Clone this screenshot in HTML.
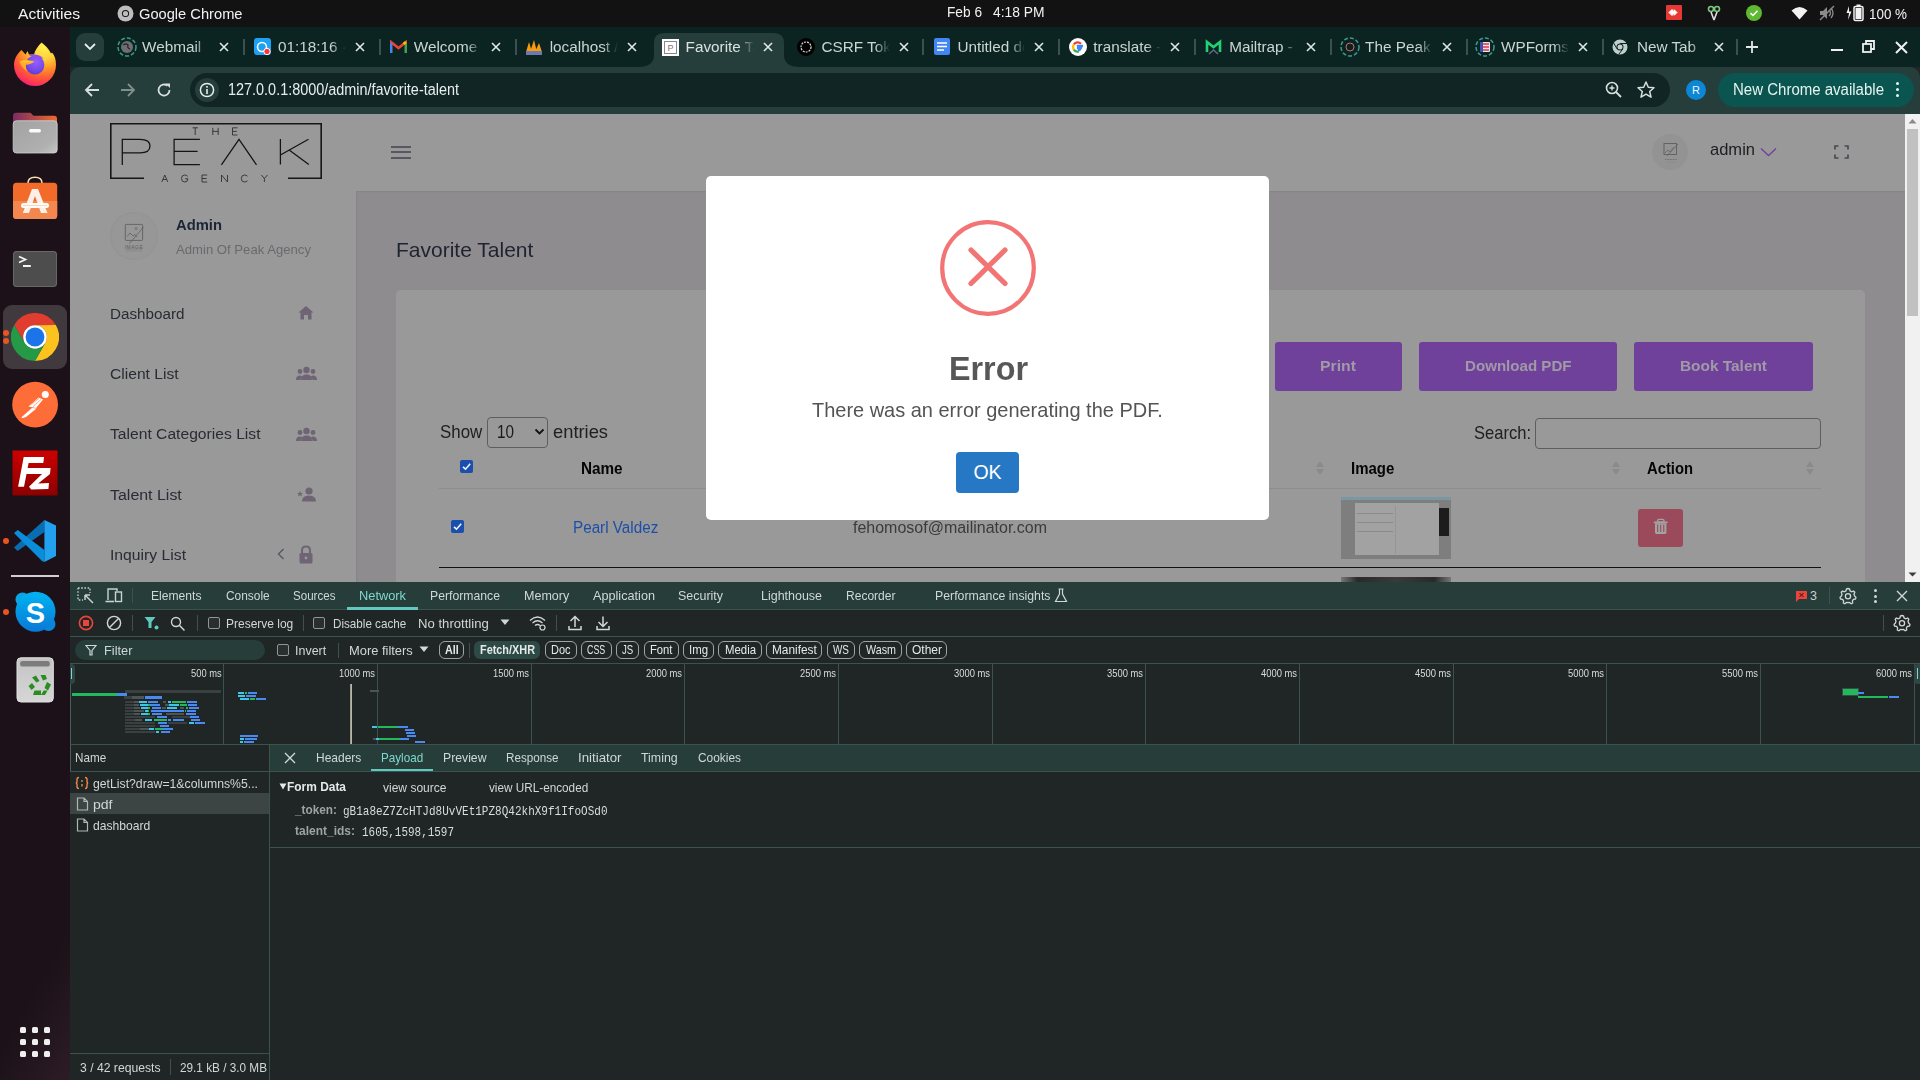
<!DOCTYPE html>
<html><head><meta charset="utf-8"><title>Favorite Talent</title>
<style>
html,body{margin:0;padding:0;width:1920px;height:1080px;overflow:hidden;background:#202525;}
body>div,body>span,body>svg{position:absolute;}
span{white-space:pre;line-height:1;}
</style></head><body>
<div style="left:0px;top:0px;width:1920px;height:27px;background:#121212;"></div>
<span style="left:18.00px;top:6.33px;font-family:'Liberation Sans';font-size:15.5px;font-weight:400;color:#f2f2f2;letter-spacing:0.000px;transform:scaleX(1.0138);transform-origin:0 0;">Activities</span>
<svg style="left:117px;top:5px" width="17" height="17" viewBox="0 0 17 17"><circle cx="8.5" cy="8.5" r="8" fill="#bdbdbd"/><circle cx="8.5" cy="8.5" r="3.6" fill="#121212"/><circle cx="8.5" cy="8.5" r="2.6" fill="#bdbdbd"/></svg>
<span style="left:139.00px;top:6.33px;font-family:'Liberation Sans';font-size:15.5px;font-weight:400;color:#f2f2f2;letter-spacing:0.000px;transform:scaleX(0.9459);transform-origin:0 0;">Google Chrome</span>
<span style="left:946.60px;top:5.87px;font-family:'Liberation Sans';font-size:13.8px;font-weight:400;color:#f2f2f2;letter-spacing:0.000px;transform:scaleX(0.9920);transform-origin:0 0;">Feb 6</span>
<span style="left:992.50px;top:5.87px;font-family:'Liberation Sans';font-size:13.8px;font-weight:400;color:#f2f2f2;letter-spacing:0.000px;transform:scaleX(1.0021);transform-origin:0 0;">4:18 PM</span>
<div style="left:1666px;top:5px;width:16px;height:15px;background:#e53935;border-radius:1px"></div>
<svg style="left:1668px;top:8px" width="12" height="9" viewBox="0 0 12 9"><path d="M1 4.5 L4 1.5 L7 4.5 L4 7.5Z M6 1.5 L9 4.5 L6 7.5" fill="#fff" stroke="#fff" stroke-width="1"/></svg>
<svg style="left:1706px;top:5px" width="16" height="16" viewBox="0 0 16 16"><circle cx="5" cy="4" r="2.5" fill="none" stroke="#7cc47f" stroke-width="1.6"/><circle cx="11" cy="4" r="2.5" fill="none" stroke="#7cc47f" stroke-width="1.6"/><path d="M5 7 L8 15 M11 7 L8 15" stroke="#ddd" stroke-width="1.6"/></svg>
<svg style="left:1746px;top:5px" width="16" height="16" viewBox="0 0 16 16"><circle cx="8" cy="8" r="8" fill="#5fb832"/><path d="M4.5 8.2 L7 10.5 L11.5 5.8" fill="none" stroke="#fff" stroke-width="1.6"/></svg>
<svg style="left:1791px;top:6px" width="17" height="14" viewBox="0 0 17 14"><path d="M0.5 4.5 Q8.5 -2.5 16.5 4.5 L8.5 13.5Z" fill="#f2f2f2"/></svg>
<svg style="left:1819px;top:5px" width="16" height="16" viewBox="0 0 16 16"><path d="M1 6 H4 L8 2 V14 L4 10 H1Z" fill="#8a8a8a"/><path d="M10 5 Q13 8 10 11 M12 3 Q16 8 12 13" fill="none" stroke="#8a8a8a" stroke-width="1.3"/><path d="M1 15 L15 1" stroke="#8a8a8a" stroke-width="1.4"/></svg>
<svg style="left:1846px;top:4px" width="20" height="18" viewBox="0 0 20 18"><path d="M3 2 L0.5 9 H3 L2 16 L5.5 7.5 H3Z" fill="#f2f2f2"/><rect x="8" y="2.5" width="9" height="14" rx="1.5" fill="none" stroke="#f2f2f2" stroke-width="1.5"/><rect x="10.5" y="0.5" width="4" height="2" fill="#f2f2f2"/><rect x="9.5" y="4" width="6" height="11" fill="#f2f2f2"/></svg>
<span style="left:1869.00px;top:6.33px;font-family:'Liberation Sans';font-size:15.5px;font-weight:400;color:#f2f2f2;letter-spacing:0.000px;transform:scaleX(0.8646);transform-origin:0 0;">100 %</span>
<div style="left:0px;top:27px;width:70px;height:1053px;background:#1c1118;"></div>
<div style="left:0px;top:860px;width:70px;height:220px;background:linear-gradient(120deg,rgba(44,28,38,0) 0%,rgba(44,28,38,0) 55%,rgba(44,28,38,1) 100%);"></div>
<svg style="left:8px;top:38px" width="54" height="54" viewBox="0 0 54 54">
<defs><radialGradient id="ffg" gradientUnits="userSpaceOnUse" cx="36" cy="8" r="44"><stop offset="0" stop-color="#fff44f"/><stop offset="0.3" stop-color="#ffd03a"/><stop offset="0.5" stop-color="#ff9a28"/><stop offset="0.72" stop-color="#ff5a36"/><stop offset="0.88" stop-color="#ff3458"/><stop offset="1" stop-color="#e8168a"/></radialGradient>
<radialGradient id="ffp" gradientUnits="userSpaceOnUse" cx="28" cy="24" r="13"><stop offset="0" stop-color="#9b5dff"/><stop offset="0.7" stop-color="#7048e8"/><stop offset="1" stop-color="#5a3bc8"/></radialGradient></defs>
<path d="M6 27 A21 21 0 0 0 48 27 C48 21 46.5 17 44 14.5 L43 15.5 C41 11 37 7 33.5 4.5 C30 8 27 12 26 16.5 L21 16.5 L19.5 13 L17.5 16.5 L13.5 12 C9 16 6 21 6 27Z" fill="url(#ffg)"/>
<circle cx="27" cy="27" r="9.4" fill="url(#ffp)"/>
<path d="M21 17.5 C26 15.5 32 16.5 35.5 20.5 C33 20 31.5 20.5 31 21.5 C28 19 24 18.5 21 17.5Z" fill="#8f4fee"/>
<path d="M11.5 23.5 C14 21.5 20 21.5 26.5 23.5 C25 25.5 21 26.5 18 26.8 C17.5 29 18 32 19.5 34 C15.5 31 12.5 27 11.5 23.5Z" fill="#ffae2a"/>
<path d="M12.5 23.3 C15 22.3 20 22.5 25 23.6 C22 24.8 16 25 12.5 23.3Z" fill="#ffc33a"/>
</svg>
<svg style="left:8px;top:108px" width="54" height="54" viewBox="0 0 54 54">
<defs><linearGradient id="fdt" x1="0" x2="1"><stop offset="0" stop-color="#7a2c62"/><stop offset="1" stop-color="#ef6b2c"/></linearGradient>
<linearGradient id="fdb" x1="0" y1="0" x2="1" y2="1"><stop offset="0" stop-color="#a2a2a2"/><stop offset="0.75" stop-color="#b0b0b0"/><stop offset="1" stop-color="#c6c6c6"/></linearGradient></defs>
<path d="M5 16 V8 Q5 4.8 8 4.8 H22.5 L25.5 7.8 H46 Q49 7.8 49 11 V20 H5Z" fill="url(#fdt)"/>
<rect x="5.2" y="12.8" width="44" height="32.2" rx="3.2" fill="url(#fdb)" stroke="#d2d2d2" stroke-width="0.8"/>
<rect x="21" y="21" width="12" height="3.5" rx="1.7" fill="#fafafa"/>
</svg>
<svg style="left:8px;top:172px" width="54" height="54" viewBox="0 0 54 54">
<path d="M20 13.5 V11 Q20 5.2 27 5.2 Q34 5.2 34 11 V13.5" fill="none" stroke="#f5e2b0" stroke-width="1.6"/>
<rect x="5" y="10.8" width="44.2" height="36.2" rx="3.5" fill="#f26b2a"/>
<path d="M5 29 H49.2 V43.5 Q49.2 47 45.7 47 H8.5 Q5 47 5 43.5Z" fill="#f2874f"/>
<path d="M24 17 H30 L39.5 41 H33 L27 24 L21 41 H14.8Z" fill="#fdf0e8"/>
<rect x="13" y="31" width="28" height="5" rx="2.5" fill="#fffaf6"/>
<rect x="15" y="33.2" width="24" height="0.6" fill="#f6c0a8"/>
</svg>
<div style="left:13px;top:251px;width:44px;height:36px;background:#4d4d4d;border-radius:4px;box-shadow:inset 0 0 0 1px #676767"></div>
<svg style="left:13px;top:251px" width="44" height="36" viewBox="0 0 44 36"><path d="M6 5.5 L12.5 8.5 L6 11.5" fill="none" stroke="#f4f4f4" stroke-width="1.7"/><rect x="10" y="14" width="7.8" height="2" fill="#f4f4f4"/></svg>
<div style="left:3px;top:305px;width:64px;height:64px;background:#403a3e;border-radius:9px"></div>
<svg style="left:11px;top:313px" width="48" height="48" viewBox="0 0 48 48">
<path d="M44.8 12 A24 24 0 0 0 3.2 12 L13.8 29.9 A11.8 11.8 0 0 1 24 12.2 Z" fill="#e03c2f"/>
<path d="M44.8 12 L24 12.2 A11.8 11.8 0 0 1 34.2 29.9 L24 48 A24 24 0 0 0 44.8 12 Z" fill="#fcc31e"/>
<path d="M24 48 L34.2 29.9 A11.8 11.8 0 0 1 13.8 29.9 L3.2 12 A24 24 0 0 0 24 48 Z" fill="#249a47"/>
<circle cx="24" cy="24" r="11.8" fill="#fff"/><circle cx="24" cy="24" r="9.4" fill="#1b74e8"/>
</svg>
<div style="left:3px;top:329.5px;width:6px;height:6px;background:#e95420;border-radius:50%"></div>
<div style="left:3px;top:338.2px;width:6px;height:6px;background:#e95420;border-radius:50%"></div>
<svg style="left:8px;top:377px" width="54" height="54" viewBox="0 0 54 54">
<circle cx="27.1" cy="27.6" r="22.9" fill="#fe6c37"/>
<circle cx="37.3" cy="17.5" r="3.5" fill="#fff"/>
<path d="M20.5 29.5 L30.5 20.5 L35 22.5 L28 31 Z" fill="#fff"/>
<path d="M24 31 L28.5 31.5 L18 40 L14 41.3 L13.5 40.2Z" fill="#fff"/>
<path d="M23 27.5 L31.5 21 M25 29.5 L33 22.5" stroke="#fe6c37" stroke-width="0.6"/>
</svg>
<svg style="left:6px;top:446px" width="58" height="58" viewBox="0 0 58 58">
<defs><linearGradient id="fzg" x1="0" y1="0" x2="0" y2="1"><stop offset="0" stop-color="#cc0000"/><stop offset="1" stop-color="#8c0000"/></linearGradient></defs>
<rect x="6.5" y="4.5" width="45" height="45" fill="url(#fzg)"/>
<g fill="none" stroke="url(#fzg)" stroke-width="3" stroke-dasharray="2.2 1.9">
<path d="M6.5 4.4 H51.5"/><path d="M6.5 49.6 H51.5"/><path d="M6.4 4.5 V49.5"/><path d="M51.6 4.5 V49.5"/></g>
<path d="M17.7 11 L38.1 11 L37.3 16.9 L22.6 16.9 L21.6 22 L44.6 22 L44 28 L20.5 28 L18 40.8 L12.1 40.8Z" fill="#fff"/>
<path d="M36 28 L44 28 L32.2 37.5 L43 37 L42.4 43 L25.2 43.5 L23 40.8 Z" fill="#fff"/>
</svg>
<svg style="left:0px;top:514px" width="64" height="64" viewBox="0 514 64 64">
<path d="M14 547.5 L17.6 551 L44.4 532 L44.4 520 Z" fill="#0a6db2"/>
<path d="M14 533 L17.8 530 L44.4 550 L44.4 562 L42 561Z" fill="#0c8ddc"/>
<path d="M44.4 520 L56 525.5 V556 L44.4 562Z" fill="#22a2ee"/>
</svg>
<div style="left:3px;top:538px;width:6px;height:6px;background:#e95420;border-radius:50%"></div>
<div style="left:11px;top:575px;width:48px;height:1.5px;background:#cfcfcf;"></div>
<svg style="left:0px;top:584px" width="64" height="64" viewBox="0 584 64 64">
<defs><linearGradient id="skg" x1="0" y1="0" x2="0" y2="1"><stop offset="0" stop-color="#00b4f2"/><stop offset="1" stop-color="#0a78d6"/></linearGradient></defs>
<circle cx="22.5" cy="599.5" r="7" fill="#0aa4e4"/><circle cx="48.5" cy="624" r="7" fill="#0a86d8"/>
<circle cx="35.5" cy="611.7" r="20" fill="url(#skg)"/>
<text x="35.3" y="623" font-family="Liberation Sans" font-weight="bold" font-size="29" fill="#fff" text-anchor="middle">S</text>
</svg>
<div style="left:3px;top:609px;width:6px;height:6px;background:#e95420;border-radius:50%"></div>
<svg style="left:16px;top:657px" width="38" height="46" viewBox="0 0 38 46">
<defs><linearGradient id="trg" x1="0" y1="0" x2="0" y2="1"><stop offset="0" stop-color="#c4c4c4"/><stop offset="1" stop-color="#d6d6d6"/></linearGradient></defs>
<rect x="1" y="0.8" width="36.3" height="44.2" rx="4" fill="url(#trg)" stroke="#e2e2e2" stroke-width="1"/>
<rect x="4.2" y="4" width="29.6" height="5.6" rx="2.2" fill="#7c7c7c"/>
<g fill="#2a8d22">
<path d="M16 20.5 L20 18.5 L23.5 24 L20.5 25.5Z"/><path d="M24.5 18 L29.5 18 L31 22 L27 23.5Z"/>
<path d="M31 25 L35 27.5 L32 33.5 L28.5 31Z"/><path d="M27.5 33.5 L31.5 33.5 L29 38 L25 38Z"/>
<path d="M18.5 33.5 L25 33.5 L25 38 L17 38 Z"/><path d="M12.5 29 L16 26 L19 30 L15.5 33Z"/>
</g>
</svg>
<div style="left:20px;top:1027px;width:6px;height:6px;background:#efefef;border-radius:1.5px"></div>
<div style="left:20px;top:1039px;width:6px;height:6px;background:#efefef;border-radius:1.5px"></div>
<div style="left:20px;top:1051px;width:6px;height:6px;background:#efefef;border-radius:1.5px"></div>
<div style="left:32px;top:1027px;width:6px;height:6px;background:#efefef;border-radius:1.5px"></div>
<div style="left:32px;top:1039px;width:6px;height:6px;background:#efefef;border-radius:1.5px"></div>
<div style="left:32px;top:1051px;width:6px;height:6px;background:#efefef;border-radius:1.5px"></div>
<div style="left:44px;top:1027px;width:6px;height:6px;background:#efefef;border-radius:1.5px"></div>
<div style="left:44px;top:1039px;width:6px;height:6px;background:#efefef;border-radius:1.5px"></div>
<div style="left:44px;top:1051px;width:6px;height:6px;background:#efefef;border-radius:1.5px"></div>
<div style="left:70px;top:27px;width:1850px;height:40px;background:#0c2421;"></div>
<div style="left:76px;top:33px;width:28px;height:28px;background:#263e3b;border-radius:9px"></div>
<svg style="left:83px;top:42px" width="14" height="9" viewBox="0 0 14 9"><path d="M2 2 L7 7 L12 2" fill="none" stroke="#e6eeec" stroke-width="1.8"/></svg>
<svg style="left:638px;top:33px" width="162" height="34" viewBox="0 0 162 34"><path d="M0 34 Q16 34 16 22 V10 Q16 0 26 0 H136 Q146 0 146 10 V22 Q146 34 162 34Z" fill="#263e3b"/></svg>
<div style="left:142.0px;top:36px;width:68px;height:24px;overflow:hidden;-webkit-mask-image:linear-gradient(90deg,#000 78%,transparent 100%);mask-image:linear-gradient(90deg,#000 78%,transparent 100%)"><span style="position:absolute;left:0;top:3.20px;font-family:'Liberation Sans';font-size:15.3px;color:#c9d6d2">Webmail</span></div>
<svg style="left:218.0px;top:41px" width="12" height="12" viewBox="0 0 12 12"><path d="M2 2 L10 10 M10 2 L2 10" stroke="#e0e8e6" stroke-width="1.6"/></svg>
<div style="left:243px;top:39px;width:1.5px;height:16px;background:#3a524f;"></div>
<div style="left:277.9px;top:36px;width:68px;height:24px;overflow:hidden;-webkit-mask-image:linear-gradient(90deg,#000 78%,transparent 100%);mask-image:linear-gradient(90deg,#000 78%,transparent 100%)"><span style="position:absolute;left:0;top:3.20px;font-family:'Liberation Sans';font-size:15.3px;color:#c9d6d2">01:18:16 · Pomo</span></div>
<svg style="left:353.9px;top:41px" width="12" height="12" viewBox="0 0 12 12"><path d="M2 2 L10 10 M10 2 L2 10" stroke="#e0e8e6" stroke-width="1.6"/></svg>
<div style="left:379px;top:39px;width:1.5px;height:16px;background:#3a524f;"></div>
<div style="left:413.8px;top:36px;width:68px;height:24px;overflow:hidden;-webkit-mask-image:linear-gradient(90deg,#000 78%,transparent 100%);mask-image:linear-gradient(90deg,#000 78%,transparent 100%)"><span style="position:absolute;left:0;top:3.20px;font-family:'Liberation Sans';font-size:15.3px;color:#c9d6d2">Welcome to</span></div>
<svg style="left:489.8px;top:41px" width="12" height="12" viewBox="0 0 12 12"><path d="M2 2 L10 10 M10 2 L2 10" stroke="#e0e8e6" stroke-width="1.6"/></svg>
<div style="left:515px;top:39px;width:1.5px;height:16px;background:#3a524f;"></div>
<div style="left:549.7px;top:36px;width:68px;height:24px;overflow:hidden;-webkit-mask-image:linear-gradient(90deg,#000 78%,transparent 100%);mask-image:linear-gradient(90deg,#000 78%,transparent 100%)"><span style="position:absolute;left:0;top:3.20px;font-family:'Liberation Sans';font-size:15.3px;color:#c9d6d2">localhost / 127</span></div>
<svg style="left:625.7px;top:41px" width="12" height="12" viewBox="0 0 12 12"><path d="M2 2 L10 10 M10 2 L2 10" stroke="#e0e8e6" stroke-width="1.6"/></svg>
<div style="left:685.6px;top:36px;width:68px;height:24px;overflow:hidden;-webkit-mask-image:linear-gradient(90deg,#000 78%,transparent 100%);mask-image:linear-gradient(90deg,#000 78%,transparent 100%)"><span style="position:absolute;left:0;top:3.20px;font-family:'Liberation Sans';font-size:15.3px;color:#d8e3e0">Favorite Talent</span></div>
<svg style="left:761.6px;top:41px" width="12" height="12" viewBox="0 0 12 12"><path d="M2 2 L10 10 M10 2 L2 10" stroke="#e0e8e6" stroke-width="1.6"/></svg>
<div style="left:821.5px;top:36px;width:68px;height:24px;overflow:hidden;-webkit-mask-image:linear-gradient(90deg,#000 78%,transparent 100%);mask-image:linear-gradient(90deg,#000 78%,transparent 100%)"><span style="position:absolute;left:0;top:3.20px;font-family:'Liberation Sans';font-size:15.3px;color:#c9d6d2">CSRF Token</span></div>
<svg style="left:897.5px;top:41px" width="12" height="12" viewBox="0 0 12 12"><path d="M2 2 L10 10 M10 2 L2 10" stroke="#e0e8e6" stroke-width="1.6"/></svg>
<div style="left:922px;top:39px;width:1.5px;height:16px;background:#3a524f;"></div>
<div style="left:957.4px;top:36px;width:68px;height:24px;overflow:hidden;-webkit-mask-image:linear-gradient(90deg,#000 78%,transparent 100%);mask-image:linear-gradient(90deg,#000 78%,transparent 100%)"><span style="position:absolute;left:0;top:3.20px;font-family:'Liberation Sans';font-size:15.3px;color:#c9d6d2">Untitled docum</span></div>
<svg style="left:1033.4px;top:41px" width="12" height="12" viewBox="0 0 12 12"><path d="M2 2 L10 10 M10 2 L2 10" stroke="#e0e8e6" stroke-width="1.6"/></svg>
<div style="left:1058px;top:39px;width:1.5px;height:16px;background:#3a524f;"></div>
<div style="left:1093.3px;top:36px;width:68px;height:24px;overflow:hidden;-webkit-mask-image:linear-gradient(90deg,#000 78%,transparent 100%);mask-image:linear-gradient(90deg,#000 78%,transparent 100%)"><span style="position:absolute;left:0;top:3.20px;font-family:'Liberation Sans';font-size:15.3px;color:#c9d6d2">translate - Go</span></div>
<svg style="left:1169.3px;top:41px" width="12" height="12" viewBox="0 0 12 12"><path d="M2 2 L10 10 M10 2 L2 10" stroke="#e0e8e6" stroke-width="1.6"/></svg>
<div style="left:1194px;top:39px;width:1.5px;height:16px;background:#3a524f;"></div>
<div style="left:1229.2px;top:36px;width:68px;height:24px;overflow:hidden;-webkit-mask-image:linear-gradient(90deg,#000 78%,transparent 100%);mask-image:linear-gradient(90deg,#000 78%,transparent 100%)"><span style="position:absolute;left:0;top:3.20px;font-family:'Liberation Sans';font-size:15.3px;color:#c9d6d2">Mailtrap - Safe</span></div>
<svg style="left:1305.2px;top:41px" width="12" height="12" viewBox="0 0 12 12"><path d="M2 2 L10 10 M10 2 L2 10" stroke="#e0e8e6" stroke-width="1.6"/></svg>
<div style="left:1330px;top:39px;width:1.5px;height:16px;background:#3a524f;"></div>
<div style="left:1365.1px;top:36px;width:68px;height:24px;overflow:hidden;-webkit-mask-image:linear-gradient(90deg,#000 78%,transparent 100%);mask-image:linear-gradient(90deg,#000 78%,transparent 100%)"><span style="position:absolute;left:0;top:3.20px;font-family:'Liberation Sans';font-size:15.3px;color:#c9d6d2">The Peak Agency</span></div>
<svg style="left:1441.1px;top:41px" width="12" height="12" viewBox="0 0 12 12"><path d="M2 2 L10 10 M10 2 L2 10" stroke="#e0e8e6" stroke-width="1.6"/></svg>
<div style="left:1466px;top:39px;width:1.5px;height:16px;background:#3a524f;"></div>
<div style="left:1501.0px;top:36px;width:68px;height:24px;overflow:hidden;-webkit-mask-image:linear-gradient(90deg,#000 78%,transparent 100%);mask-image:linear-gradient(90deg,#000 78%,transparent 100%)"><span style="position:absolute;left:0;top:3.20px;font-family:'Liberation Sans';font-size:15.3px;color:#c9d6d2">WPForms Lite</span></div>
<svg style="left:1577.0px;top:41px" width="12" height="12" viewBox="0 0 12 12"><path d="M2 2 L10 10 M10 2 L2 10" stroke="#e0e8e6" stroke-width="1.6"/></svg>
<div style="left:1602px;top:39px;width:1.5px;height:16px;background:#3a524f;"></div>
<div style="left:1636.9px;top:36px;width:68px;height:24px;overflow:hidden;-webkit-mask-image:linear-gradient(90deg,#000 78%,transparent 100%);mask-image:linear-gradient(90deg,#000 78%,transparent 100%)"><span style="position:absolute;left:0;top:3.20px;font-family:'Liberation Sans';font-size:15.3px;color:#c9d6d2">New Tab</span></div>
<svg style="left:1712.9px;top:41px" width="12" height="12" viewBox="0 0 12 12"><path d="M2 2 L10 10 M10 2 L2 10" stroke="#e0e8e6" stroke-width="1.6"/></svg>
<div style="left:1736px;top:39px;width:1.5px;height:16px;background:#3a524f;"></div>
<svg style="left:117px;top:37px" width="20" height="20" viewBox="0 0 20 20"><circle cx="10" cy="10" r="9" fill="none" stroke="#3b9a8e" stroke-width="1.5" stroke-dasharray="4 2"/><circle cx="10" cy="10" r="6" fill="#6e6e72"/><path d="M6 8 Q9 6 11 8 Q10 11 13 12" fill="none" stroke="#2b2b2b" stroke-width="1.4"/></svg>
<svg style="left:254px;top:38px" width="18" height="18" viewBox="0 0 18 18"><rect x="0" y="0" width="17" height="17" rx="3" fill="#1da1f2"/><circle cx="8" cy="9" r="4.5" fill="none" stroke="#fff" stroke-width="1.6"/><circle cx="13" cy="13.5" r="3.2" fill="#f43b3b" stroke="#fff" stroke-width="1"/></svg>
<svg style="left:390px;top:40px" width="17" height="14" viewBox="0 0 17 14"><path d="M1 13 V2 L8.5 8 L16 2 V13" fill="none" stroke="#ea4335" stroke-width="2.6"/><path d="M1 13 V3" stroke="#4285f4" stroke-width="2.6"/><path d="M16 13 V3" stroke="#34a853" stroke-width="2.6"/><path d="M13.5 4 L16 2" stroke="#fbbc04" stroke-width="2.6"/></svg>
<svg style="left:525px;top:38px" width="18" height="18" viewBox="0 0 18 18"><path d="M1 14 L4 4 L7 14Z M5 14 L9 2 L12 14Z M10 14 L14 5 L17 14Z" fill="#f89c0e"/><rect x="1" y="13" width="16" height="4" fill="#6c78af"/></svg>
<svg style="left:662px;top:39px" width="17" height="17" viewBox="0 0 17 17"><rect x="0" y="0" width="17" height="17" fill="#fff"/><rect x="2.5" y="2.5" width="12" height="12" fill="none" stroke="#888" stroke-width="1"/><text x="8.5" y="12" font-family="Liberation Sans" font-size="9" fill="#777" text-anchor="middle">P</text></svg>
<svg style="left:797px;top:38px" width="18" height="18" viewBox="0 0 18 18"><circle cx="9" cy="9" r="9" fill="#000"/><circle cx="9" cy="9" r="5" fill="none" stroke="#ddd" stroke-width="1.2" stroke-dasharray="2 1"/></svg>
<svg style="left:934px;top:38px" width="16" height="17" viewBox="0 0 16 17"><rect x="0" y="0" width="16" height="17" rx="2" fill="#4285f4"/><path d="M3 5 H13 M3 8.5 H13 M3 12 H10" stroke="#fff" stroke-width="1.5"/></svg>
<svg style="left:1069px;top:38px" width="18" height="18" viewBox="0 0 18 18"><circle cx="9" cy="9" r="9" fill="#fff"/><path d="M14 7.9 H9 V10.1 H11.9 A3.4 3.4 0 0 1 9 12.4" fill="none" stroke="#4285f4" stroke-width="2.3"/><path d="M12 5.7 A4.6 4.6 0 0 0 4.9 6.4" fill="none" stroke="#ea4335" stroke-width="2.3"/><path d="M4.9 6.4 A4.6 4.6 0 0 0 4.9 11.6" fill="none" stroke="#fbbc05" stroke-width="2.3"/><path d="M4.9 11.6 A4.6 4.6 0 0 0 9.8 13.5" fill="none" stroke="#34a853" stroke-width="2.3"/></svg>
<svg style="left:1205px;top:38px" width="17" height="18" viewBox="0 0 17 18"><path d="M2 14 V4 L8.5 9 L15 4 V14" fill="none" stroke="#22d172" stroke-width="2.6"/><path d="M4 16 L8.5 12 L13 16" fill="none" stroke="#5a6a8a" stroke-width="1.6"/></svg>
<svg style="left:1340px;top:37px" width="20" height="20" viewBox="0 0 20 20"><circle cx="10" cy="10" r="9" fill="none" stroke="#3b9a8e" stroke-width="1.5" stroke-dasharray="4 2"/><circle cx="10" cy="10" r="6.5" fill="#1b1b1b"/><circle cx="10" cy="10" r="4" fill="none" stroke="#888" stroke-width="1"/></svg>
<svg style="left:1475px;top:37px" width="20" height="20" viewBox="0 0 20 20"><circle cx="10" cy="10" r="9" fill="none" stroke="#3b9a8e" stroke-width="1.5" stroke-dasharray="4 2"/><rect x="5" y="5" width="10" height="10" rx="1" fill="#e5e5f5"/><path d="M6 7 H14 M6 10 H14 M6 13 H14" stroke="#e53935" stroke-width="1.4"/><rect x="5" y="5" width="3" height="10" fill="#3f51b5"/></svg>
<svg style="left:1612px;top:39px" width="16" height="16" viewBox="0 0 16 16"><circle cx="8" cy="8" r="7.5" fill="#bfcfcb"/><circle cx="8" cy="8" r="3.5" fill="#0c2421"/><circle cx="8" cy="8" r="2.5" fill="#bfcfcb"/><path d="M8 4.5 H15 M5 9.8 L1.5 3.8 M10.8 10 L7 15" stroke="#0c2421" stroke-width="1"/></svg>
<svg style="left:1745px;top:40px" width="14" height="14" viewBox="0 0 14 14"><path d="M7 1 V13 M1 7 H13" stroke="#e0e8e6" stroke-width="1.8"/></svg>
<div style="left:1831px;top:49px;width:12px;height:2px;background:#f0f0f0;"></div>
<svg style="left:1862px;top:40px" width="14" height="14" viewBox="0 0 14 14"><rect x="1" y="4" width="8" height="8" fill="none" stroke="#f0f0f0" stroke-width="1.8"/><path d="M4 4 V1 H12 V9 H9" fill="none" stroke="#f0f0f0" stroke-width="1.8"/></svg>
<svg style="left:1895px;top:41px" width="13" height="13" viewBox="0 0 13 13"><path d="M1 1 L12 12 M12 1 L1 12" stroke="#f0f0f0" stroke-width="2"/></svg>
<div style="left:70px;top:67px;width:1850px;height:47px;background:#263e3b;border-radius:10px 10px 0 0"></div>
<svg style="left:83px;top:81px" width="18" height="18" viewBox="0 0 18 18"><path d="M16 9 H3 M9 3 L3 9 L9 15" fill="none" stroke="#d5e0dd" stroke-width="1.8"/></svg>
<svg style="left:119px;top:81px" width="18" height="18" viewBox="0 0 18 18"><path d="M2 9 H15 M9 3 L15 9 L9 15" fill="none" stroke="#7d908c" stroke-width="1.8"/></svg>
<svg style="left:155px;top:81px" width="18" height="18" viewBox="0 0 18 18"><path d="M14.5 9 A5.5 5.5 0 1 1 12.5 4.8" fill="none" stroke="#d5e0dd" stroke-width="1.8"/><path d="M10.5 2.5 H15 V7 Z" fill="#d5e0dd"/></svg>
<div style="left:190px;top:73px;width:1480px;height:34px;background:#112624;border-radius:17px"></div>
<div style="left:195px;top:78px;width:24px;height:24px;background:#263e3b;border-radius:50%"></div>
<svg style="left:199px;top:82px" width="16" height="16" viewBox="0 0 16 16"><circle cx="8" cy="8" r="6.6" fill="none" stroke="#e6eeec" stroke-width="1.5"/><rect x="7.2" y="7" width="1.6" height="5" fill="#e6eeec"/><rect x="7.2" y="4" width="1.6" height="1.7" fill="#e6eeec"/></svg>
<span style="left:228.00px;top:82.14px;font-family:'Liberation Sans';font-size:15.6px;font-weight:400;color:#e6eeec;letter-spacing:0.000px;transform:scaleX(0.9252);transform-origin:0 0;">127.0.0.1:8000/admin/favorite-talent</span>
<svg style="left:1604px;top:80px" width="20" height="20" viewBox="0 0 20 20"><circle cx="8" cy="8" r="5.5" fill="none" stroke="#d5e0dd" stroke-width="1.6"/><path d="M12 12 L17 17" stroke="#d5e0dd" stroke-width="1.8"/><path d="M8 5.5 V10.5 M5.5 8 H10.5" stroke="#d5e0dd" stroke-width="1.4"/></svg>
<svg style="left:1636px;top:80px" width="20" height="20" viewBox="0 0 20 20"><path d="M10 2 L12.3 7.3 L18 7.8 L13.7 11.5 L15 17.2 L10 14.2 L5 17.2 L6.3 11.5 L2 7.8 L7.7 7.3Z" fill="none" stroke="#d5e0dd" stroke-width="1.5" stroke-linejoin="round"/></svg>
<div style="left:1686px;top:80px;width:20px;height:20px;background:#0b87d6;border-radius:50%"></div>
<span style="left:1692.02px;top:85.15px;font-family:'Liberation Sans';font-size:11px;font-weight:400;color:#f0f6ff;letter-spacing:0.000px;">R</span>
<div style="left:1718px;top:73px;width:196px;height:34px;background:#0b5550;border-radius:17px"></div>
<span style="left:1733.00px;top:82.24px;font-family:'Liberation Sans';font-size:15.6px;font-weight:400;color:#e6f4f1;letter-spacing:0.000px;transform:scaleX(0.9625);transform-origin:0 0;">New Chrome available</span>
<div style="left:1896px;top:82px;width:3px;height:3px;background:#e6f4f1;border-radius:50%"></div>
<div style="left:1896px;top:88px;width:3px;height:3px;background:#e6f4f1;border-radius:50%"></div>
<div style="left:1896px;top:94px;width:3px;height:3px;background:#e6f4f1;border-radius:50%"></div>
<div style="left:70px;top:114px;width:1835px;height:468px;background:#999999;"></div>
<div style="left:356px;top:191px;width:1549px;height:391px;background:#8f8c8f;box-shadow:inset 1px 1px 2px rgba(0,0,0,0.06)"></div>
<div style="left:110px;top:123px;width:212px;height:56px;background:transparent;box-shadow:inset 0 0 0 1.6px #161616"></div>
<div style="left:144px;top:175px;width:144px;height:6px;background:#999999;"></div>
<svg style="left:110px;top:123px" width="212" height="62" viewBox="0 0 212 62">
<g fill="none" stroke="#141414" stroke-width="1.25">
<path d="M12.3 42 V16.3 H30 Q40 16.3 40 23 Q40 29.8 30 29.8 H12.3"/>
<path d="M89.9 16.3 H64.1 V41.5 H89.9 M64.1 28.4 H87.6"/>
<path d="M111.4 41.9 L129 16.4 L146.5 41.9"/>
<path d="M170.4 16 V41.5 M170.4 32 L198.5 16.3 M179.5 27.2 L198.8 41.5"/>
</g>
<g fill="none" stroke="#2a2a2a" stroke-width="0.85">
<path d="M82.5 4.8 H88 M85.2 4.8 V12"/><path d="M102.8 4.8 V12 M108.2 4.8 V12 M102.8 8.4 H108.2"/><path d="M127.5 4.8 H122.5 V12 H127.5 M122.5 8.4 H126.8"/>
<path d="M51.8 59 L54.8 52 L57.8 59 M53.0 56.5 H56.599999999999994 M77.7 53.3 Q76.2 52 74.7 52 Q71.5 52 71.5 55.5 Q71.5 59 74.7 59 Q77.9 59 77.9 55.8 H75.2 M97.19999999999999 52 H92.0 V59 H97.19999999999999 M92.0 55.5 H96.6 M111.5 59 V52 L117.5 59 V52 M137.5 53.2 Q136.0 52 134.5 52 Q131.3 52 131.3 55.5 Q131.3 59 134.5 59 Q136.0 59 137.5 57.8 M151.4 52 L154.4 55.5 L157.4 52 M154.4 55.5 V59"/>
</g></svg>
<div style="left:391px;top:145.9px;width:20px;height:2.1px;background:#57575f;"></div>
<div style="left:391px;top:151px;width:20px;height:2.1px;background:#57575f;"></div>
<div style="left:391px;top:156.8px;width:20px;height:2.1px;background:#57575f;"></div>
<div style="left:1653px;top:135px;width:34px;height:34px;background:#939393;border-radius:50%;box-shadow:0 0 0 1px #949494"></div>
<svg style="left:1661px;top:141px" width="20" height="24" viewBox="0 0 20 24"><rect x="3" y="2.5" width="12.5" height="11" fill="none" stroke="#5e5e5e" stroke-width="0.9"/><path d="M4 12 L7 9 L9 11 L13 6 M6 15 L17 3" fill="none" stroke="#5e5e5e" stroke-width="0.7"/><path d="M4 18.5 H16" stroke="#707070" stroke-width="1.2" stroke-dasharray="1 0.6"/><path d="M5 21 H15" stroke="#888" stroke-width="0.6"/></svg>
<span style="left:1710.00px;top:141.35px;font-family:'Liberation Sans';font-size:17px;font-weight:400;color:#1e1e22;letter-spacing:0.000px;transform:scaleX(0.9717);transform-origin:0 0;">admin</span>
<svg style="left:1760px;top:147px" width="17" height="10" viewBox="0 0 17 10"><path d="M1 1.5 L8.5 8.5 L16 1.5" fill="none" stroke="#6e3fa0" stroke-width="1.3"/></svg>
<svg style="left:1834px;top:145px" width="15" height="14" viewBox="0 0 15 14"><path d="M1 4.5 V1 H4.5 M10.5 1 H14 V4.5 M14 9.5 V13 H10.5 M4.5 13 H1 V9.5" fill="none" stroke="#4a4a52" stroke-width="1.7"/></svg>
<div style="left:110px;top:212px;width:48px;height:48px;background:#979797;border-radius:50%;box-shadow:0 0 2px #8e8e8e inset"></div>
<svg style="left:122px;top:222px" width="24" height="32" viewBox="0 0 24 32"><rect x="3.3" y="2.4" width="17.3" height="16" rx="0.8" fill="none" stroke="#666" stroke-width="1"/><path d="M5 14.5 L8 11 L11 14 L13 12.5 L15 15 M7.5 21.5 L21.5 5" fill="none" stroke="#5e5e5e" stroke-width="0.75"/><circle cx="14" cy="6.5" r="1" fill="none" stroke="#5e5e5e" stroke-width="0.6"/><text x="12" y="26.8" font-family="Liberation Sans" font-size="5" fill="#606060" text-anchor="middle" letter-spacing="0.5">IMAGE</text><path d="M3.5 27.8 H20.5" stroke="#7a7a7a" stroke-width="0.5"/><path d="M3.5 29.4 H20.5" stroke="#8a8a8a" stroke-width="0.8" stroke-dasharray="1.2 0.5"/></svg>
<span style="left:176.00px;top:218.48px;font-family:'Liberation Sans';font-size:14.5px;font-weight:700;color:#1c2535;letter-spacing:0.000px;transform:scaleX(1.0197);transform-origin:0 0;">Admin</span>
<span style="left:176.00px;top:242.65px;font-family:'Liberation Sans';font-size:13px;font-weight:400;color:#6a6a6e;letter-spacing:0.000px;transform:scaleX(1.0098);transform-origin:0 0;">Admin Of Peak Agency</span>
<span style="left:110.00px;top:305.82px;font-family:'Liberation Sans';font-size:15.5px;font-weight:400;color:#2a2c34;letter-spacing:0.000px;transform:scaleX(0.9825);transform-origin:0 0;">Dashboard</span>
<span style="left:110.00px;top:365.82px;font-family:'Liberation Sans';font-size:15.5px;font-weight:400;color:#2a2c34;letter-spacing:0.000px;transform:scaleX(1.0079);transform-origin:0 0;">Client List</span>
<span style="left:110.00px;top:426.32px;font-family:'Liberation Sans';font-size:15.5px;font-weight:400;color:#2a2c34;letter-spacing:0.000px;transform:scaleX(1.0096);transform-origin:0 0;">Talent Categories List</span>
<span style="left:110.00px;top:486.82px;font-family:'Liberation Sans';font-size:15.5px;font-weight:400;color:#2a2c34;letter-spacing:0.000px;transform:scaleX(1.0287);transform-origin:0 0;">Talent List</span>
<span style="left:110.00px;top:546.83px;font-family:'Liberation Sans';font-size:15.5px;font-weight:400;color:#2a2c34;letter-spacing:0.000px;transform:scaleX(1.0140);transform-origin:0 0;">Inquiry List</span>
<svg style="left:298px;top:305px" width="16" height="15" viewBox="0 0 16 15"><path d="M8 1 L15.5 7.5 H13.5 V14.5 H10 V10 H6 V14.5 H2.5 V7.5 H0.5Z" fill="#6e6474"/></svg>
<svg style="left:296px;top:366px" width="21" height="15" viewBox="0 0 21 15"><circle cx="10.5" cy="4" r="3.2" fill="#6e6474"/><circle cx="4" cy="5.5" r="2.4" fill="#6e6474"/><circle cx="17" cy="5.5" r="2.4" fill="#6e6474"/><path d="M5 14 Q5 8.5 10.5 8.5 Q16 8.5 16 14Z M0 14 Q0 9.5 4 9.5 Q5.5 9.5 6 10.5 Q4.5 12 4.5 14Z M21 14 Q21 9.5 17 9.5 Q15.5 9.5 15 10.5 Q16.5 12 16.5 14Z" fill="#6e6474"/></svg>
<svg style="left:296px;top:427px" width="21" height="15" viewBox="0 0 21 15"><circle cx="10.5" cy="4" r="3.2" fill="#6e6474"/><circle cx="4" cy="5.5" r="2.4" fill="#6e6474"/><circle cx="17" cy="5.5" r="2.4" fill="#6e6474"/><path d="M5 14 Q5 8.5 10.5 8.5 Q16 8.5 16 14Z M0 14 Q0 9.5 4 9.5 Q5.5 9.5 6 10.5 Q4.5 12 4.5 14Z M21 14 Q21 9.5 17 9.5 Q15.5 9.5 15 10.5 Q16.5 12 16.5 14Z" fill="#6e6474"/></svg>
<svg style="left:297px;top:487px" width="20" height="15" viewBox="0 0 20 15"><circle cx="12" cy="4" r="3.6" fill="#6e6474"/><path d="M5 14.5 Q5 8.5 12 8.5 Q19 8.5 19 14.5Z" fill="#6e6474"/><path d="M3 4 L3.8 6 L6 6 L4.3 7.3 L5 9.5 L3 8.2 L1 9.5 L1.7 7.3 L0 6 L2.2 6Z" fill="#6e6474"/></svg>
<svg style="left:277px;top:548px" width="8" height="12" viewBox="0 0 8 12"><path d="M6.5 1 L1.5 6 L6.5 11" fill="none" stroke="#5b5560" stroke-width="1.4"/></svg>
<svg style="left:299px;top:545px" width="14" height="19" viewBox="0 0 14 19"><path d="M3 8 V5.5 Q3 1.5 7 1.5 Q11 1.5 11 5.5 V8" fill="none" stroke="#6e6474" stroke-width="2"/><rect x="0.5" y="8" width="13" height="10.5" rx="1.5" fill="#6e6474"/><circle cx="7" cy="13" r="1.4" fill="#999"/></svg>
<span style="left:396.30px;top:239.83px;font-family:'Liberation Sans';font-size:20.2px;font-weight:400;color:#1d2330;letter-spacing:0.000px;transform:scaleX(1.0405);transform-origin:0 0;">Favorite Talent</span>
<div style="left:396px;top:290px;width:1469px;height:292px;background:#999999;border-radius:5px 5px 0 0"></div>
<div style="left:1275px;top:342px;width:127px;height:49px;background:#6f419b;border-radius:3px"></div>
<div style="left:1419px;top:342px;width:198px;height:49px;background:#6f419b;border-radius:3px"></div>
<div style="left:1634px;top:342px;width:179px;height:49px;background:#6f419b;border-radius:3px"></div>
<span style="left:1320.00px;top:359.42px;font-family:'Liberation Sans';font-size:14.8px;font-weight:700;color:#a09aa6;letter-spacing:0.000px;transform:scaleX(1.0677);transform-origin:0 0;">Print</span>
<span style="left:1465.20px;top:359.42px;font-family:'Liberation Sans';font-size:14.8px;font-weight:700;color:#a09aa6;letter-spacing:0.000px;transform:scaleX(1.0210);transform-origin:0 0;">Download PDF</span>
<span style="left:1680.00px;top:359.42px;font-family:'Liberation Sans';font-size:14.8px;font-weight:700;color:#a09aa6;letter-spacing:0.000px;transform:scaleX(1.0407);transform-origin:0 0;">Book Talent</span>
<span style="left:439.80px;top:423.23px;font-family:'Liberation Sans';font-size:18.2px;font-weight:400;color:#202020;letter-spacing:0.000px;transform:scaleX(0.9275);transform-origin:0 0;">Show</span>
<div style="left:487px;top:417px;width:61px;height:31px;background:transparent;border:1px solid #5e5e5e;border-radius:4px;box-sizing:border-box"></div>
<span style="left:497.00px;top:424.12px;font-family:'Liberation Sans';font-size:17.5px;font-weight:400;color:#1a1a1a;letter-spacing:0.000px;transform:scaleX(0.8732);transform-origin:0 0;">10</span>
<svg style="left:534px;top:428px" width="11" height="8" viewBox="0 0 11 8"><path d="M1.5 1.5 L5.5 5.5 L9.5 1.5" fill="none" stroke="#111" stroke-width="1.8"/></svg>
<span style="left:553.00px;top:423.23px;font-family:'Liberation Sans';font-size:18.2px;font-weight:400;color:#202020;letter-spacing:0.000px;transform:scaleX(1.0074);transform-origin:0 0;">entries</span>
<span style="left:1474.00px;top:424.03px;font-family:'Liberation Sans';font-size:18.2px;font-weight:400;color:#202020;letter-spacing:0.000px;transform:scaleX(0.9093);transform-origin:0 0;">Search:</span>
<div style="left:1535px;top:418px;width:286px;height:31px;background:#999999;border:1px solid #5e5e5e;border-radius:4px;box-sizing:border-box"></div>
<div style="left:460px;top:460px;width:13px;height:13px;background:#1a4fae;border-radius:2px"></div>
<svg style="left:460px;top:460px" width="13" height="13" viewBox="0 0 13 13"><path d="M3 6.8 L5.5 9.2 L10.2 3.8" fill="none" stroke="#eef2fa" stroke-width="1.6"/></svg>
<span style="left:581.00px;top:460.60px;font-family:'Liberation Sans';font-size:16px;font-weight:700;color:#050505;letter-spacing:0.000px;transform:scaleX(0.9546);transform-origin:0 0;">Name</span>
<span style="left:1350.50px;top:460.60px;font-family:'Liberation Sans';font-size:16px;font-weight:700;color:#050505;letter-spacing:0.000px;transform:scaleX(0.9362);transform-origin:0 0;">Image</span>
<span style="left:1647.00px;top:460.60px;font-family:'Liberation Sans';font-size:16px;font-weight:700;color:#050505;letter-spacing:0.000px;transform:scaleX(0.9240);transform-origin:0 0;">Action</span>
<svg style="left:1314.5px;top:460px" width="10" height="16" viewBox="0 0 10 16"><path d="M5 1 L9 7 H1Z M5 15 L9 9 H1Z" fill="#8a8a8a"/></svg>
<svg style="left:1611px;top:460px" width="10" height="16" viewBox="0 0 10 16"><path d="M5 1 L9 7 H1Z M5 15 L9 9 H1Z" fill="#8a8a8a"/></svg>
<svg style="left:1805px;top:460px" width="10" height="16" viewBox="0 0 10 16"><path d="M5 1 L9 7 H1Z M5 15 L9 9 H1Z" fill="#8a8a8a"/></svg>
<div style="left:439px;top:488px;width:1382px;height:1px;background:#8c8c94;"></div>
<div style="left:451px;top:520px;width:13px;height:13px;background:#1a4fae;border-radius:2px"></div>
<svg style="left:451px;top:520px" width="13" height="13" viewBox="0 0 13 13"><path d="M3 6.8 L5.5 9.2 L10.2 3.8" fill="none" stroke="#eef2fa" stroke-width="1.6"/></svg>
<span style="left:572.70px;top:519.74px;font-family:'Liberation Sans';font-size:15.6px;font-weight:400;color:#1f4ea8;letter-spacing:0.000px;transform:scaleX(0.9775);transform-origin:0 0;">Pearl Valdez</span>
<span style="left:853.00px;top:519.74px;font-family:'Liberation Sans';font-size:15.6px;font-weight:400;color:#3b3b3b;letter-spacing:0.000px;transform:scaleX(1.0254);transform-origin:0 0;">fehomosof@mailinator.com</span>
<div style="left:1341px;top:497px;width:110px;height:62px;background:#7e7e7e;"></div>
<div style="left:1341px;top:497px;width:110px;height:3px;background:#7a98a4;"></div>
<div style="left:1355px;top:503px;width:84px;height:52px;background:#a2a2a2;"></div>
<div style="left:1439px;top:508px;width:10px;height:28px;background:#1c1c1c;"></div>
<div style="left:1357px;top:513px;width:36px;height:1px;background:#8a8a8a;"></div>
<div style="left:1357px;top:522px;width:36px;height:1px;background:#8a8a8a;"></div>
<div style="left:1357px;top:531px;width:36px;height:1px;background:#8a8a8a;"></div>
<div style="left:1395px;top:506px;width:1px;height:48px;background:#959595;"></div>
<div style="left:1638px;top:509px;width:45px;height:38px;background:#9b4a5c;border-radius:3px"></div>
<svg style="left:1650px;top:517px" width="20" height="20" viewBox="0 0 20 20"><rect x="3.7" y="4.4" width="14" height="1.8" rx="0.9" fill="#a3a3a3"/><rect x="7.6" y="2.4" width="6.4" height="2.8" rx="1.3" fill="none" stroke="#a3a3a3" stroke-width="1.3"/><path d="M5 6.3 H16.4 V15.6 Q16.4 17 15 17 H6.4 Q5 17 5 15.6Z" fill="#a3a3a3"/><rect x="7.1" y="7.6" width="1.1" height="7.4" fill="#9b4a5c"/><rect x="10.15" y="7.6" width="1.1" height="7.4" fill="#9b4a5c"/><rect x="13.2" y="7.6" width="1.1" height="7.4" fill="#9b4a5c"/></svg>
<div style="left:439px;top:566.5px;width:1382px;height:1.6px;background:#111;"></div>
<div style="left:1341px;top:577px;width:110px;height:5px;background:linear-gradient(90deg,#777 0%,#2a2a2a 15%,#3a3a3a 50%,#2a2a2a 85%,#777 100%);"></div>
<div style="left:1905px;top:114px;width:15px;height:468px;background:#f1f1f1;"></div>
<div style="left:1907px;top:129px;width:11px;height:187px;background:#c1c1c1;border-radius:0"></div>
<svg style="left:1908px;top:118px" width="9" height="6" viewBox="0 0 9 6"><path d="M0.5 5.5 L4.5 1 L8.5 5.5Z" fill="#8a8a8a"/></svg>
<svg style="left:1908px;top:571.5px" width="9" height="6" viewBox="0 0 9 6"><path d="M0.5 0.5 L4.5 4.5 L8.5 0.5Z" fill="#3c3c3c"/></svg>
<div style="left:706px;top:176px;width:563px;height:344px;background:#ffffff;border-radius:5px"></div>
<svg style="left:938px;top:218px" width="100" height="100" viewBox="0 0 100 100"><circle cx="50" cy="50" r="45.8" fill="none" stroke="#f27474" stroke-width="4.2"/><path d="M33 32 L67 65.5 M67 32 L33 65.5" stroke="#f27474" stroke-width="5.2" stroke-linecap="round"/></svg>
<span style="left:949.00px;top:352.22px;font-family:'Liberation Sans';font-size:33.5px;font-weight:700;color:#575757;letter-spacing:0.000px;transform:scaleX(0.9643);transform-origin:0 0;">Error</span>
<span style="left:812.00px;top:401.17px;font-family:'Liberation Sans';font-size:19.8px;font-weight:400;color:#545454;letter-spacing:0.000px;transform:scaleX(1.0093);transform-origin:0 0;">There was an error generating the PDF.</span>
<div style="left:956px;top:452px;width:63px;height:41px;background:#2778c4;border-radius:4px"></div>
<span style="left:973.41px;top:463.43px;font-family:'Liberation Sans';font-size:19.5px;font-weight:400;color:#ffffff;letter-spacing:0.000px;">OK</span>
<div style="left:70px;top:582px;width:1850px;height:498px;background:#202525;"></div>
<div style="left:70px;top:582px;width:1850px;height:27px;background:#263d3a;"></div>
<div style="left:70px;top:609px;width:1850px;height:1px;background:#3b524e;"></div>
<svg style="left:77px;top:587px" width="18" height="18" viewBox="0 0 18 18"><path d="M1 1 H13 V6 M1 1 V13 H6" fill="none" stroke="#c8d2d0" stroke-width="1.3" stroke-dasharray="1.6 1.6"/><path d="M8 8 L16 16 M8 8 H13 M8 8 V13" fill="none" stroke="#c8d2d0" stroke-width="1.5"/></svg>
<svg style="left:105px;top:587px" width="18" height="18" viewBox="0 0 18 18"><path d="M3 13 V2 H12 V4" fill="none" stroke="#c8d2d0" stroke-width="1.4"/><path d="M0.5 14.5 H9" stroke="#c8d2d0" stroke-width="1.6"/><rect x="10.5" y="5" width="6" height="9.5" fill="none" stroke="#c8d2d0" stroke-width="1.4"/></svg>
<div style="left:132px;top:588px;width:1px;height:15px;background:#3b524e;"></div>
<span style="left:150.80px;top:588.78px;font-family:'Liberation Sans';font-size:13.2px;font-weight:400;color:#d0d8d6;letter-spacing:0.000px;transform:scaleX(0.9184);transform-origin:0 0;">Elements</span>
<span style="left:225.50px;top:588.78px;font-family:'Liberation Sans';font-size:13.2px;font-weight:400;color:#d0d8d6;letter-spacing:0.000px;transform:scaleX(0.9031);transform-origin:0 0;">Console</span>
<span style="left:292.50px;top:588.78px;font-family:'Liberation Sans';font-size:13.2px;font-weight:400;color:#d0d8d6;letter-spacing:0.000px;transform:scaleX(0.8783);transform-origin:0 0;">Sources</span>
<span style="left:358.80px;top:588.78px;font-family:'Liberation Sans';font-size:13.2px;font-weight:400;color:#7ed8cd;letter-spacing:0.000px;transform:scaleX(0.9716);transform-origin:0 0;">Network</span>
<span style="left:429.50px;top:588.78px;font-family:'Liberation Sans';font-size:13.2px;font-weight:400;color:#d0d8d6;letter-spacing:0.000px;transform:scaleX(0.9272);transform-origin:0 0;">Performance</span>
<span style="left:523.80px;top:588.78px;font-family:'Liberation Sans';font-size:13.2px;font-weight:400;color:#d0d8d6;letter-spacing:0.000px;transform:scaleX(0.9491);transform-origin:0 0;">Memory</span>
<span style="left:592.50px;top:588.78px;font-family:'Liberation Sans';font-size:13.2px;font-weight:400;color:#d0d8d6;letter-spacing:0.000px;transform:scaleX(0.9610);transform-origin:0 0;">Application</span>
<span style="left:678.00px;top:588.78px;font-family:'Liberation Sans';font-size:13.2px;font-weight:400;color:#d0d8d6;letter-spacing:0.000px;transform:scaleX(0.9446);transform-origin:0 0;">Security</span>
<span style="left:761.00px;top:588.78px;font-family:'Liberation Sans';font-size:13.2px;font-weight:400;color:#d0d8d6;letter-spacing:0.000px;transform:scaleX(0.9453);transform-origin:0 0;">Lighthouse</span>
<span style="left:845.50px;top:588.78px;font-family:'Liberation Sans';font-size:13.2px;font-weight:400;color:#d0d8d6;letter-spacing:0.000px;transform:scaleX(0.9124);transform-origin:0 0;">Recorder</span>
<span style="left:934.50px;top:588.78px;font-family:'Liberation Sans';font-size:13.2px;font-weight:400;color:#d0d8d6;letter-spacing:0.000px;transform:scaleX(0.9324);transform-origin:0 0;">Performance insights</span>
<div style="left:347px;top:607px;width:71px;height:2.5px;background:#5fc9bd;"></div>
<svg style="left:1054px;top:588px" width="14" height="15" viewBox="0 0 14 15"><path d="M4.5 1 H9.5 M5.5 1 V6 L1.5 13.5 H12.5 L8.5 6 V1" fill="none" stroke="#d0d8d6" stroke-width="1.2"/></svg>
<svg style="left:1795px;top:590px" width="13" height="12" viewBox="0 0 13 12"><path d="M1 1 H12 V9 H4 L1 12Z" fill="#e8453c"/><path d="M4.5 3 L8.5 7 M8.5 3 L4.5 7" stroke="#3a1010" stroke-width="1"/></svg>
<span style="left:1810.00px;top:590.38px;font-family:'Liberation Sans';font-size:12.5px;font-weight:400;color:#c8d2d0;letter-spacing:0.000px;">3</span>
<div style="left:1829px;top:587px;width:1px;height:17px;background:#3b524e;"></div>
<svg style="left:1839px;top:587px" width="18" height="18" viewBox="0 0 18 18"><path d="M9 1.5 L10.6 1.8 L11 3.9 L12.6 4.8 L14.6 4 L15.8 5.3 L15 7.3 L15.6 9 L17 10.4 L16.5 12 L14.4 12.4 L13.4 13.9 L13.7 16 L12.2 16.8 L10.6 15.4 L9 15.6 L7.4 15.4 L5.8 16.8 L4.3 16 L4.6 13.9 L3.6 12.4 L1.5 12 L1 10.4 L2.4 9 L3 7.3 L2.2 5.3 L3.4 4 L5.4 4.8 L7 3.9 L7.4 1.8Z" fill="none" stroke="#d0d8d6" stroke-width="1.3" stroke-linejoin="round"/><circle cx="9" cy="9.3" r="2.6" fill="none" stroke="#d0d8d6" stroke-width="1.3"/></svg>
<div style="left:1874px;top:589px;width:3px;height:3px;background:#d0d8d6;border-radius:50%"></div>
<div style="left:1874px;top:594.5px;width:3px;height:3px;background:#d0d8d6;border-radius:50%"></div>
<div style="left:1874px;top:600px;width:3px;height:3px;background:#d0d8d6;border-radius:50%"></div>
<svg style="left:1896px;top:590px" width="12" height="12" viewBox="0 0 12 12"><path d="M1 1 L11 11 M11 1 L1 11" stroke="#d0d8d6" stroke-width="1.4"/></svg>
<div style="left:70px;top:636px;width:1850px;height:1px;background:#3b524e;"></div>
<svg style="left:78px;top:615px" width="16" height="16" viewBox="0 0 16 16"><circle cx="8" cy="8" r="6.6" fill="none" stroke="#e8453c" stroke-width="1.6"/><rect x="5" y="5" width="6" height="6" fill="#e8453c"/></svg>
<svg style="left:106px;top:615px" width="16" height="16" viewBox="0 0 16 16"><circle cx="8" cy="8" r="6.6" fill="none" stroke="#d0d8d6" stroke-width="1.4"/><path d="M3.5 12.5 L12.5 3.5" stroke="#d0d8d6" stroke-width="1.4"/></svg>
<div style="left:132px;top:615px;width:1px;height:16px;background:#3b524e;"></div>
<svg style="left:144px;top:616px" width="16" height="15" viewBox="0 0 16 15"><path d="M0.5 1 H11.5 L7.5 6 V12 H4.5 V6Z" fill="#5ec9bd"/><circle cx="12.5" cy="11.5" r="2" fill="#5ec9bd"/></svg>
<svg style="left:170px;top:616px" width="16" height="16" viewBox="0 0 16 16"><circle cx="6" cy="6" r="4.5" fill="none" stroke="#d0d8d6" stroke-width="1.4"/><path d="M9.3 9.3 L14.5 14.5" stroke="#d0d8d6" stroke-width="1.5"/></svg>
<div style="left:197px;top:615px;width:1px;height:16px;background:#3b524e;"></div>
<div style="left:208px;top:617px;width:12px;height:12px;background:transparent;border:1.3px solid #8c9896;border-radius:2px;box-sizing:border-box;background:#2a2e2e"></div>
<span style="left:226.40px;top:616.78px;font-family:'Liberation Sans';font-size:13.2px;font-weight:400;color:#d0d8d6;letter-spacing:0.000px;transform:scaleX(0.9089);transform-origin:0 0;">Preserve log</span>
<div style="left:303px;top:615px;width:1px;height:16px;background:#3b524e;"></div>
<div style="left:313px;top:617px;width:12px;height:12px;background:transparent;border:1.3px solid #8c9896;border-radius:2px;box-sizing:border-box;background:#2a2e2e"></div>
<span style="left:332.50px;top:616.78px;font-family:'Liberation Sans';font-size:13.2px;font-weight:400;color:#d0d8d6;letter-spacing:0.000px;transform:scaleX(0.8836);transform-origin:0 0;">Disable cache</span>
<span style="left:417.50px;top:616.78px;font-family:'Liberation Sans';font-size:13.2px;font-weight:400;color:#d0d8d6;letter-spacing:0.000px;transform:scaleX(0.9956);transform-origin:0 0;">No throttling</span>
<svg style="left:500px;top:619px" width="10" height="7" viewBox="0 0 10 7"><path d="M0.5 0.5 H9.5 L5 6Z" fill="#d0d8d6"/></svg>
<svg style="left:529px;top:615px" width="18" height="16" viewBox="0 0 18 16"><path d="M1 5.5 Q8.5 -1.5 16 5.5 M3.5 8 Q8.5 3.5 13.5 8 M6 10.5 Q8.5 8.5 11 10.5" fill="none" stroke="#d0d8d6" stroke-width="1.3"/><circle cx="13.5" cy="12.5" r="2.5" fill="none" stroke="#d0d8d6" stroke-width="1.2"/></svg>
<div style="left:556px;top:615px;width:1px;height:16px;background:#3b524e;"></div>
<svg style="left:568px;top:615px" width="14" height="16" viewBox="0 0 14 16"><path d="M7 12 V2 M2.5 6 L7 1.5 L11.5 6 M1 11 V14.5 H13 V11" fill="none" stroke="#d0d8d6" stroke-width="1.5"/></svg>
<svg style="left:596px;top:615px" width="14" height="16" viewBox="0 0 14 16"><path d="M7 1.5 V11.5 M2.5 7 L7 11.5 L11.5 7 M1 11 V14.5 H13 V11" fill="none" stroke="#d0d8d6" stroke-width="1.5"/></svg>
<div style="left:1883px;top:615px;width:1px;height:16px;background:#3b524e;"></div>
<svg style="left:1893px;top:614px" width="18" height="18" viewBox="0 0 18 18"><path d="M9 1.5 L10.6 1.8 L11 3.9 L12.6 4.8 L14.6 4 L15.8 5.3 L15 7.3 L15.6 9 L17 10.4 L16.5 12 L14.4 12.4 L13.4 13.9 L13.7 16 L12.2 16.8 L10.6 15.4 L9 15.6 L7.4 15.4 L5.8 16.8 L4.3 16 L4.6 13.9 L3.6 12.4 L1.5 12 L1 10.4 L2.4 9 L3 7.3 L2.2 5.3 L3.4 4 L5.4 4.8 L7 3.9 L7.4 1.8Z" fill="none" stroke="#d0d8d6" stroke-width="1.3" stroke-linejoin="round"/><circle cx="9" cy="9.3" r="2.6" fill="none" stroke="#d0d8d6" stroke-width="1.3"/></svg>
<div style="left:70px;top:663px;width:1850px;height:1px;background:#3b524e;"></div>
<div style="left:75px;top:640px;width:190px;height:20px;background:#263d3a;border-radius:10px"></div>
<svg style="left:85px;top:644px" width="12" height="12" viewBox="0 0 12 12"><path d="M1 1.5 H11 L7 6.5 V11 H5 V6.5Z" fill="none" stroke="#d0d8d6" stroke-width="1.2"/></svg>
<span style="left:103.60px;top:643.78px;font-family:'Liberation Sans';font-size:13.2px;font-weight:400;color:#d0d8d6;letter-spacing:0.000px;transform:scaleX(0.9689);transform-origin:0 0;">Filter</span>
<div style="left:277px;top:644px;width:12px;height:12px;background:transparent;border:1.3px solid #8c9896;border-radius:2px;box-sizing:border-box;background:#2a2e2e"></div>
<span style="left:295.00px;top:643.78px;font-family:'Liberation Sans';font-size:13.2px;font-weight:400;color:#d0d8d6;letter-spacing:0.000px;transform:scaleX(0.9459);transform-origin:0 0;">Invert</span>
<div style="left:338px;top:643px;width:1px;height:15px;background:#3b524e;"></div>
<span style="left:349.20px;top:643.78px;font-family:'Liberation Sans';font-size:13.2px;font-weight:400;color:#d0d8d6;letter-spacing:0.000px;transform:scaleX(0.9782);transform-origin:0 0;">More filters</span>
<svg style="left:419px;top:646px" width="10" height="7" viewBox="0 0 10 7"><path d="M0.5 0.5 H9.5 L5 6Z" fill="#d0d8d6"/></svg>
<div style="left:469px;top:643px;width:1px;height:15px;background:#3b524e;"></div>
<div style="left:439.2px;top:641px;width:25.30000000000001px;height:18px;background:transparent;border:1px solid #9aa6a4;border-radius:6px;box-sizing:border-box"></div>
<span style="left:444.98px;top:643.45px;font-family:'Liberation Sans';font-size:13px;font-weight:700;color:#e4eae8;letter-spacing:0.000px;transform:scaleX(0.8271);transform-origin:0 0;">All</span>
<div style="left:474.2px;top:641px;width:66.30000000000001px;height:18px;background:#2e4a46;border-radius:6px"></div>
<span style="left:479.85px;top:643.45px;font-family:'Liberation Sans';font-size:13px;font-weight:700;color:#e4eae8;letter-spacing:0.000px;transform:scaleX(0.8367);transform-origin:0 0;">Fetch/XHR</span>
<div style="left:545px;top:641px;width:31.799999999999955px;height:18px;background:transparent;border:1px solid #9aa6a4;border-radius:6px;box-sizing:border-box"></div>
<span style="left:551.15px;top:643.45px;font-family:'Liberation Sans';font-size:13px;font-weight:400;color:#e4eae8;letter-spacing:0.000px;transform:scaleX(0.8432);transform-origin:0 0;">Doc</span>
<div style="left:581.2px;top:641px;width:30.59999999999991px;height:18px;background:transparent;border:1px solid #9aa6a4;border-radius:6px;box-sizing:border-box"></div>
<span style="left:587.38px;top:643.45px;font-family:'Liberation Sans';font-size:13px;font-weight:400;color:#e4eae8;letter-spacing:0.000px;transform:scaleX(0.6826);transform-origin:0 0;">CSS</span>
<div style="left:616.2px;top:641px;width:23.299999999999955px;height:18px;background:transparent;border:1px solid #9aa6a4;border-radius:6px;box-sizing:border-box"></div>
<span style="left:622.23px;top:643.45px;font-family:'Liberation Sans';font-size:13px;font-weight:400;color:#e4eae8;letter-spacing:0.000px;transform:scaleX(0.7415);transform-origin:0 0;">JS</span>
<div style="left:644.2px;top:641px;width:34.59999999999991px;height:18px;background:transparent;border:1px solid #9aa6a4;border-radius:6px;box-sizing:border-box"></div>
<span style="left:650.25px;top:643.45px;font-family:'Liberation Sans';font-size:13px;font-weight:400;color:#e4eae8;letter-spacing:0.000px;transform:scaleX(0.8649);transform-origin:0 0;">Font</span>
<div style="left:683.2px;top:641px;width:30.59999999999991px;height:18px;background:transparent;border:1px solid #9aa6a4;border-radius:6px;box-sizing:border-box"></div>
<span style="left:689.00px;top:643.45px;font-family:'Liberation Sans';font-size:13px;font-weight:400;color:#e4eae8;letter-spacing:0.000px;transform:scaleX(0.8767);transform-origin:0 0;">Img</span>
<div style="left:718.2px;top:641px;width:43.59999999999991px;height:18px;background:transparent;border:1px solid #9aa6a4;border-radius:6px;box-sizing:border-box"></div>
<span style="left:724.50px;top:643.45px;font-family:'Liberation Sans';font-size:13px;font-weight:400;color:#e4eae8;letter-spacing:0.000px;transform:scaleX(0.8752);transform-origin:0 0;">Media</span>
<div style="left:766.2px;top:641px;width:56.299999999999955px;height:18px;background:transparent;border:1px solid #9aa6a4;border-radius:6px;box-sizing:border-box"></div>
<span style="left:771.98px;top:643.45px;font-family:'Liberation Sans';font-size:13px;font-weight:400;color:#e4eae8;letter-spacing:0.000px;transform:scaleX(0.9107);transform-origin:0 0;">Manifest</span>
<div style="left:827px;top:641px;width:27.5px;height:18px;background:transparent;border:1px solid #9aa6a4;border-radius:6px;box-sizing:border-box"></div>
<span style="left:832.75px;top:643.45px;font-family:'Liberation Sans';font-size:13px;font-weight:400;color:#e4eae8;letter-spacing:0.000px;transform:scaleX(0.7636);transform-origin:0 0;">WS</span>
<div style="left:859.2px;top:641px;width:42.59999999999991px;height:18px;background:transparent;border:1px solid #9aa6a4;border-radius:6px;box-sizing:border-box"></div>
<span style="left:865.50px;top:643.45px;font-family:'Liberation Sans';font-size:13px;font-weight:400;color:#e4eae8;letter-spacing:0.000px;transform:scaleX(0.8251);transform-origin:0 0;">Wasm</span>
<div style="left:906.2px;top:641px;width:41.299999999999955px;height:18px;background:transparent;border:1px solid #9aa6a4;border-radius:6px;box-sizing:border-box"></div>
<span style="left:911.85px;top:643.45px;font-family:'Liberation Sans';font-size:13px;font-weight:400;color:#e4eae8;letter-spacing:0.000px;transform:scaleX(0.9226);transform-origin:0 0;">Other</span>
<div style="left:70px;top:744px;width:1850px;height:1px;background:#3b524e;"></div>
<div style="left:223px;top:664px;width:1px;height:80px;background:#3b524e;"></div>
<span style="left:190.60px;top:668.32px;font-family:'Liberation Sans';font-size:10.8px;font-weight:400;color:#d8dedc;letter-spacing:0.000px;transform:scaleX(0.8643);transform-origin:0 0;">500 ms</span>
<div style="left:377px;top:664px;width:1px;height:80px;background:#3b524e;"></div>
<span style="left:339.10px;top:668.32px;font-family:'Liberation Sans';font-size:10.8px;font-weight:400;color:#d8dedc;letter-spacing:0.000px;transform:scaleX(0.8691);transform-origin:0 0;">1000 ms</span>
<div style="left:531px;top:664px;width:1px;height:80px;background:#3b524e;"></div>
<span style="left:492.70px;top:668.32px;font-family:'Liberation Sans';font-size:10.8px;font-weight:400;color:#d8dedc;letter-spacing:0.000px;transform:scaleX(0.8691);transform-origin:0 0;">1500 ms</span>
<div style="left:684px;top:664px;width:1px;height:80px;background:#3b524e;"></div>
<span style="left:646.00px;top:668.32px;font-family:'Liberation Sans';font-size:10.8px;font-weight:400;color:#d8dedc;letter-spacing:0.000px;transform:scaleX(0.8691);transform-origin:0 0;">2000 ms</span>
<div style="left:838px;top:664px;width:1px;height:80px;background:#3b524e;"></div>
<span style="left:799.80px;top:668.32px;font-family:'Liberation Sans';font-size:10.8px;font-weight:400;color:#d8dedc;letter-spacing:0.000px;transform:scaleX(0.8691);transform-origin:0 0;">2500 ms</span>
<div style="left:992px;top:664px;width:1px;height:80px;background:#3b524e;"></div>
<span style="left:953.70px;top:668.32px;font-family:'Liberation Sans';font-size:10.8px;font-weight:400;color:#d8dedc;letter-spacing:0.000px;transform:scaleX(0.8691);transform-origin:0 0;">3000 ms</span>
<div style="left:1145px;top:664px;width:1px;height:80px;background:#3b524e;"></div>
<span style="left:1107.10px;top:668.32px;font-family:'Liberation Sans';font-size:10.8px;font-weight:400;color:#d8dedc;letter-spacing:0.000px;transform:scaleX(0.8691);transform-origin:0 0;">3500 ms</span>
<div style="left:1299px;top:664px;width:1px;height:80px;background:#3b524e;"></div>
<span style="left:1261.00px;top:668.32px;font-family:'Liberation Sans';font-size:10.8px;font-weight:400;color:#d8dedc;letter-spacing:0.000px;transform:scaleX(0.8691);transform-origin:0 0;">4000 ms</span>
<div style="left:1453px;top:664px;width:1px;height:80px;background:#3b524e;"></div>
<span style="left:1414.80px;top:668.32px;font-family:'Liberation Sans';font-size:10.8px;font-weight:400;color:#d8dedc;letter-spacing:0.000px;transform:scaleX(0.8691);transform-origin:0 0;">4500 ms</span>
<div style="left:1606px;top:664px;width:1px;height:80px;background:#3b524e;"></div>
<span style="left:1567.90px;top:668.32px;font-family:'Liberation Sans';font-size:10.8px;font-weight:400;color:#d8dedc;letter-spacing:0.000px;transform:scaleX(0.8691);transform-origin:0 0;">5000 ms</span>
<div style="left:1760px;top:664px;width:1px;height:80px;background:#3b524e;"></div>
<span style="left:1722.00px;top:668.32px;font-family:'Liberation Sans';font-size:10.8px;font-weight:400;color:#d8dedc;letter-spacing:0.000px;transform:scaleX(0.8691);transform-origin:0 0;">5500 ms</span>
<div style="left:1914px;top:664px;width:1px;height:80px;background:#3b524e;"></div>
<span style="left:1875.80px;top:668.32px;font-family:'Liberation Sans';font-size:10.8px;font-weight:400;color:#d8dedc;letter-spacing:0.000px;transform:scaleX(0.8691);transform-origin:0 0;">6000 ms</span>
<div style="left:70px;top:664px;width:5px;height:20px;background:#2f4744;border-radius:0 4px 4px 0"></div>
<div style="left:71px;top:668px;width:1.2px;height:11px;background:#7fd6cd;"></div>
<div style="left:1914px;top:664px;width:6px;height:20px;background:#2f4744;border-radius:4px 0 0 4px"></div>
<div style="left:1917px;top:668px;width:1.2px;height:11px;background:#7fd6cd;"></div>
<div style="left:70px;top:684px;width:1px;height:60px;background:#4a605c;"></div>
<div style="left:72px;top:693px;width:45px;height:2.5px;background:#22b85c;"></div>
<div style="left:117px;top:693px;width:10px;height:2.5px;background:#4a8af0;"></div>
<div style="left:125px;top:690px;width:96px;height:2.5px;background:#3a403f;"></div>
<div style="left:124px;top:696px;width:8px;height:2.5px;background:#3a403f;"></div>
<div style="left:132px;top:696px;width:12px;height:2.5px;background:#4d5453;"></div>
<div style="left:145px;top:696px;width:17px;height:2.5px;background:#4a8af0;"></div>
<div style="left:125px;top:701px;width:10px;height:2px;background:#3a403f;"></div>
<div style="left:134px;top:701px;width:5px;height:2px;background:#4d5453;"></div>
<div style="left:139px;top:701px;width:7px;height:2px;background:#3fc5e8;"></div>
<div style="left:146px;top:701px;width:1px;height:2px;background:#3fc5e8;"></div>
<div style="left:148px;top:701px;width:10px;height:2px;background:#4a8af0;"></div>
<div style="left:163px;top:701px;width:3px;height:2px;background:#4d5453;"></div>
<div style="left:168px;top:701px;width:3px;height:2px;background:#3fc5e8;"></div>
<div style="left:172px;top:701px;width:14px;height:2px;background:#22b85c;"></div>
<div style="left:187px;top:701px;width:10px;height:2px;background:#4a8af0;"></div>
<div style="left:125px;top:704px;width:10px;height:2px;background:#3a403f;"></div>
<div style="left:134px;top:704px;width:5px;height:2px;background:#4d5453;"></div>
<div style="left:140px;top:704px;width:8px;height:2px;background:#3fc5e8;"></div>
<div style="left:148px;top:704px;width:2px;height:2px;background:#22b85c;"></div>
<div style="left:150px;top:704px;width:10px;height:2px;background:#4a8af0;"></div>
<div style="left:165px;top:704px;width:5px;height:2px;background:#4d5453;"></div>
<div style="left:169px;top:704px;width:10px;height:2px;background:#3fc5e8;"></div>
<div style="left:180px;top:704px;width:7px;height:2px;background:#22b85c;"></div>
<div style="left:188px;top:704px;width:9px;height:2px;background:#4a8af0;"></div>
<div style="left:125px;top:707px;width:10px;height:2px;background:#3a403f;"></div>
<div style="left:134px;top:707px;width:6px;height:2px;background:#4d5453;"></div>
<div style="left:141px;top:707px;width:7px;height:2px;background:#3fc5e8;"></div>
<div style="left:148px;top:707px;width:2px;height:2px;background:#22b85c;"></div>
<div style="left:152px;top:707px;width:9px;height:2px;background:#4a8af0;"></div>
<div style="left:162px;top:707px;width:4px;height:2px;background:#4d5453;"></div>
<div style="left:167px;top:707px;width:10px;height:2px;background:#3fc5e8;"></div>
<div style="left:180px;top:707px;width:4px;height:2px;background:#4d5453;"></div>
<div style="left:186px;top:707px;width:2px;height:2px;background:#22b85c;"></div>
<div style="left:189px;top:707px;width:10px;height:2px;background:#4a8af0;"></div>
<div style="left:125px;top:710px;width:10px;height:2px;background:#3a403f;"></div>
<div style="left:134px;top:710px;width:10px;height:2px;background:#4d5453;"></div>
<div style="left:145px;top:710px;width:3px;height:2px;background:#3fc5e8;"></div>
<div style="left:148px;top:710px;width:1px;height:2px;background:#22b85c;"></div>
<div style="left:151px;top:710px;width:33px;height:2px;background:#4a8af0;"></div>
<div style="left:185px;top:710px;width:1px;height:2px;background:#22b85c;"></div>
<div style="left:187px;top:710px;width:9px;height:2px;background:#4a8af0;"></div>
<div style="left:125px;top:713px;width:10px;height:2px;background:#3a403f;"></div>
<div style="left:134px;top:713px;width:6px;height:2px;background:#4d5453;"></div>
<div style="left:141px;top:713px;width:7px;height:2px;background:#3fc5e8;"></div>
<div style="left:148px;top:713px;width:2px;height:2px;background:#22b85c;"></div>
<div style="left:152px;top:713px;width:10px;height:2px;background:#4a8af0;"></div>
<div style="left:166px;top:713px;width:18px;height:2px;background:#4d5453;"></div>
<div style="left:186px;top:713px;width:10px;height:2px;background:#4a8af0;"></div>
<div style="left:125px;top:716px;width:30px;height:2px;background:#3a403f;"></div>
<div style="left:157px;top:716px;width:10px;height:2px;background:#4a8af0;"></div>
<div style="left:172px;top:716px;width:18px;height:2px;background:#3a403f;"></div>
<div style="left:190px;top:716px;width:9px;height:2px;background:#4a8af0;"></div>
<div style="left:125px;top:719px;width:10px;height:2px;background:#3a403f;"></div>
<div style="left:135px;top:719px;width:7px;height:2px;background:#4d5453;"></div>
<div style="left:145px;top:719px;width:7px;height:2px;background:#3fc5e8;"></div>
<div style="left:154px;top:719px;width:13px;height:2px;background:#22b85c;"></div>
<div style="left:168px;top:719px;width:3px;height:2px;background:#4a8af0;"></div>
<div style="left:173px;top:719px;width:11px;height:2px;background:#4a8af0;"></div>
<div style="left:191px;top:719px;width:9px;height:2px;background:#4a8af0;"></div>
<div style="left:125px;top:722px;width:30px;height:2px;background:#3a403f;"></div>
<div style="left:158px;top:722px;width:9px;height:2px;background:#4a8af0;"></div>
<div style="left:168px;top:722px;width:19px;height:2px;background:#3a403f;"></div>
<div style="left:189px;top:722px;width:5px;height:2px;background:#3fc5e8;"></div>
<div style="left:195px;top:722px;width:10px;height:2px;background:#4a8af0;"></div>
<div style="left:125px;top:725px;width:30px;height:2px;background:#3a403f;"></div>
<div style="left:160px;top:725px;width:9px;height:2px;background:#4a8af0;"></div>
<div style="left:125px;top:728px;width:15px;height:2px;background:#3a403f;"></div>
<div style="left:140px;top:728px;width:9px;height:2px;background:#4d5453;"></div>
<div style="left:149px;top:728px;width:5px;height:2px;background:#3fc5e8;"></div>
<div style="left:155px;top:728px;width:8px;height:2px;background:#22b85c;"></div>
<div style="left:163px;top:728px;width:10px;height:2px;background:#4a8af0;"></div>
<div style="left:125px;top:731px;width:30px;height:2px;background:#3a403f;"></div>
<div style="left:156px;top:731px;width:3px;height:2px;background:#3fc5e8;"></div>
<div style="left:161px;top:731px;width:9px;height:2px;background:#4a8af0;"></div>
<div style="left:238px;top:692px;width:6px;height:2px;background:#3fc5e8;"></div>
<div style="left:245px;top:692px;width:2px;height:2px;background:#22b85c;"></div>
<div style="left:248px;top:692px;width:9px;height:2px;background:#4a8af0;"></div>
<div style="left:238px;top:695px;width:7px;height:2px;background:#3fc5e8;"></div>
<div style="left:246px;top:695px;width:10px;height:2px;background:#4a8af0;"></div>
<div style="left:240px;top:698px;width:9px;height:2px;background:#3fc5e8;"></div>
<div style="left:250px;top:698px;width:5px;height:2px;background:#22b85c;"></div>
<div style="left:256px;top:698px;width:10px;height:2px;background:#4a8af0;"></div>
<div style="left:240px;top:735px;width:18px;height:2px;background:#4a8af0;"></div>
<div style="left:240px;top:738px;width:4px;height:2px;background:#3fc5e8;"></div>
<div style="left:245px;top:738px;width:12px;height:2px;background:#4a8af0;"></div>
<div style="left:240px;top:741px;width:3px;height:2px;background:#3fc5e8;"></div>
<div style="left:244px;top:741px;width:10px;height:2px;background:#4a8af0;"></div>
<div style="left:350px;top:684px;width:1.2px;height:60px;background:#f0804a;"></div>
<div style="left:351.2px;top:684px;width:1.2px;height:60px;background:#6ad0f0;"></div>
<div style="left:370px;top:690px;width:9px;height:1.5px;background:#4d5453;"></div>
<div style="left:372px;top:726px;width:3px;height:2px;background:#3fc5e8;"></div>
<div style="left:375px;top:726px;width:2px;height:2px;background:#3fc5e8;"></div>
<div style="left:378px;top:726px;width:20px;height:2px;background:#22b85c;"></div>
<div style="left:398px;top:726px;width:10px;height:2px;background:#4a8af0;"></div>
<div style="left:405px;top:729px;width:9px;height:2px;background:#4a8af0;"></div>
<div style="left:406px;top:732px;width:9px;height:2px;background:#4a8af0;"></div>
<div style="left:407px;top:735px;width:9px;height:2px;background:#4a8af0;"></div>
<div style="left:373px;top:738px;width:3px;height:2px;background:#4d5453;"></div>
<div style="left:376px;top:738px;width:3px;height:2px;background:#3fc5e8;"></div>
<div style="left:379px;top:738px;width:21px;height:2px;background:#22b85c;"></div>
<div style="left:400px;top:738px;width:9px;height:2px;background:#4a8af0;"></div>
<div style="left:415px;top:741px;width:10px;height:2px;background:#4a8af0;"></div>
<div style="left:1843px;top:689px;width:15px;height:6px;background:#22b85c;box-shadow:0 0 0 1px #3a4a47"></div>
<div style="left:1858px;top:692px;width:6px;height:1.5px;background:#4a8af0;"></div>
<div style="left:1858px;top:696px;width:30px;height:1.5px;background:#22b85c;"></div>
<div style="left:1889px;top:696px;width:10px;height:2px;background:#4a8af0;"></div>
<div style="left:269px;top:745px;width:1px;height:335px;background:#3b524e;"></div>
<div style="left:270px;top:745px;width:1650px;height:26px;background:#263d3a;"></div>
<div style="left:70px;top:771px;width:1850px;height:1px;background:#3b524e;"></div>
<div style="left:70px;top:745px;width:1px;height:26px;background:#4a605c;"></div>
<span style="left:75.40px;top:750.78px;font-family:'Liberation Sans';font-size:13.2px;font-weight:400;color:#d0d8d6;letter-spacing:0.000px;transform:scaleX(0.8867);transform-origin:0 0;">Name</span>
<div style="left:70px;top:793px;width:199px;height:21px;background:#3c4544;"></div>
<svg style="left:75px;top:776px" width="14" height="14" viewBox="0 0 14 14"><path d="M4 1.5 Q2 1.5 2 3.5 V5.5 Q2 7 0.8 7 Q2 7 2 8.5 V10.5 Q2 12.5 4 12.5 M10 1.5 Q12 1.5 12 3.5 V5.5 Q12 7 13.2 7 Q12 7 12 8.5 V10.5 Q12 12.5 10 12.5" fill="none" stroke="#f08a4b" stroke-width="1.4"/><circle cx="7" cy="5" r="0.9" fill="#f08a4b"/><path d="M7 8 V10.5" stroke="#f08a4b" stroke-width="1.4"/></svg>
<span style="left:93.00px;top:776.78px;font-family:'Liberation Sans';font-size:13.2px;font-weight:400;color:#d0d8d6;letter-spacing:0.000px;transform:scaleX(0.9282);transform-origin:0 0;">getList?draw=1&amp;columns%5...</span>
<svg style="left:76px;top:797px" width="13" height="14" viewBox="0 0 13 14"><path d="M1.5 1 H8 L11.5 4.5 V13 H1.5Z M8 1 V4.5 H11.5" fill="none" stroke="#b0b8b6" stroke-width="1.2"/></svg>
<svg style="left:76px;top:818px" width="13" height="14" viewBox="0 0 13 14"><path d="M1.5 1 H8 L11.5 4.5 V13 H1.5Z M8 1 V4.5 H11.5" fill="none" stroke="#b0b8b6" stroke-width="1.2"/></svg>
<span style="left:93.00px;top:797.78px;font-family:'Liberation Sans';font-size:13.2px;font-weight:400;color:#d0d8d6;letter-spacing:0.000px;transform:scaleX(1.0630);transform-origin:0 0;">pdf</span>
<span style="left:93.00px;top:818.78px;font-family:'Liberation Sans';font-size:13.2px;font-weight:400;color:#d0d8d6;letter-spacing:0.000px;transform:scaleX(0.9193);transform-origin:0 0;">dashboard</span>
<div style="left:70px;top:1053px;width:199px;height:1px;background:#3b524e;"></div>
<span style="left:80.40px;top:1060.78px;font-family:'Liberation Sans';font-size:13.2px;font-weight:400;color:#d0d8d6;letter-spacing:0.000px;transform:scaleX(0.9238);transform-origin:0 0;">3 / 42 requests</span>
<div style="left:170px;top:1059px;width:1px;height:16px;background:#3b524e;"></div>
<span style="left:180.00px;top:1060.78px;font-family:'Liberation Sans';font-size:13.2px;font-weight:400;color:#d0d8d6;letter-spacing:0.000px;transform:scaleX(0.8923);transform-origin:0 0;">29.1 kB / 3.0 MB</span>
<svg style="left:284px;top:752px" width="12" height="12" viewBox="0 0 12 12"><path d="M1 1 L11 11 M11 1 L1 11" stroke="#d0d8d6" stroke-width="1.4"/></svg>
<span style="left:315.50px;top:750.78px;font-family:'Liberation Sans';font-size:13.2px;font-weight:400;color:#d0d8d6;letter-spacing:0.000px;transform:scaleX(0.9086);transform-origin:0 0;">Headers</span>
<span style="left:380.80px;top:750.78px;font-family:'Liberation Sans';font-size:13.2px;font-weight:400;color:#7ed8cd;letter-spacing:0.000px;transform:scaleX(0.8852);transform-origin:0 0;">Payload</span>
<span style="left:442.50px;top:750.78px;font-family:'Liberation Sans';font-size:13.2px;font-weight:400;color:#d0d8d6;letter-spacing:0.000px;transform:scaleX(0.9274);transform-origin:0 0;">Preview</span>
<span style="left:505.50px;top:750.78px;font-family:'Liberation Sans';font-size:13.2px;font-weight:400;color:#d0d8d6;letter-spacing:0.000px;transform:scaleX(0.8840);transform-origin:0 0;">Response</span>
<span style="left:577.50px;top:750.78px;font-family:'Liberation Sans';font-size:13.2px;font-weight:400;color:#d0d8d6;letter-spacing:0.000px;transform:scaleX(1.0058);transform-origin:0 0;">Initiator</span>
<span style="left:640.80px;top:750.78px;font-family:'Liberation Sans';font-size:13.2px;font-weight:400;color:#d0d8d6;letter-spacing:0.000px;transform:scaleX(0.9388);transform-origin:0 0;">Timing</span>
<span style="left:697.50px;top:750.78px;font-family:'Liberation Sans';font-size:13.2px;font-weight:400;color:#d0d8d6;letter-spacing:0.000px;transform:scaleX(0.9023);transform-origin:0 0;">Cookies</span>
<div style="left:371px;top:768.5px;width:62px;height:2.5px;background:#5fc9bd;"></div>
<svg style="left:279px;top:783px" width="8" height="7" viewBox="0 0 8 7"><path d="M0.5 0.5 H7.5 L4 6.5Z" fill="#e4eae8"/></svg>
<span style="left:287.00px;top:779.78px;font-family:'Liberation Sans';font-size:13.2px;font-weight:700;color:#e4eae8;letter-spacing:0.000px;transform:scaleX(0.9046);transform-origin:0 0;">Form Data</span>
<span style="left:382.50px;top:780.78px;font-family:'Liberation Sans';font-size:13.2px;font-weight:400;color:#d0d8d6;letter-spacing:0.000px;transform:scaleX(0.9118);transform-origin:0 0;">view source</span>
<span style="left:488.80px;top:780.78px;font-family:'Liberation Sans';font-size:13.2px;font-weight:400;color:#d0d8d6;letter-spacing:0.000px;transform:scaleX(0.8903);transform-origin:0 0;">view URL-encoded</span>
<span style="left:295.00px;top:804.29px;font-family:'Liberation Sans';font-size:12.6px;font-weight:700;color:#9aa4a2;letter-spacing:0.000px;transform:scaleX(0.9376);transform-origin:0 0;">_token:</span>
<span style="left:342.50px;top:805.24px;font-family:'Liberation Mono';font-size:13.5px;font-weight:400;color:#d8dedc;letter-spacing:0.000px;transform:scaleX(0.8162);transform-origin:0 0;">gB1a8eZ7ZcHTJd8UvVEt1PZ8Q42khX9f1IfoOSd0</span>
<span style="left:295.00px;top:825.29px;font-family:'Liberation Sans';font-size:12.6px;font-weight:700;color:#9aa4a2;letter-spacing:0.000px;transform:scaleX(0.9526);transform-origin:0 0;">talent_ids:</span>
<span style="left:361.80px;top:826.24px;font-family:'Liberation Mono';font-size:13.5px;font-weight:400;color:#d8dedc;letter-spacing:0.000px;transform:scaleX(0.8111);transform-origin:0 0;">1605,1598,1597</span>
<div style="left:270px;top:847px;width:1650px;height:1px;background:#3b524e;"></div>
</body></html>
